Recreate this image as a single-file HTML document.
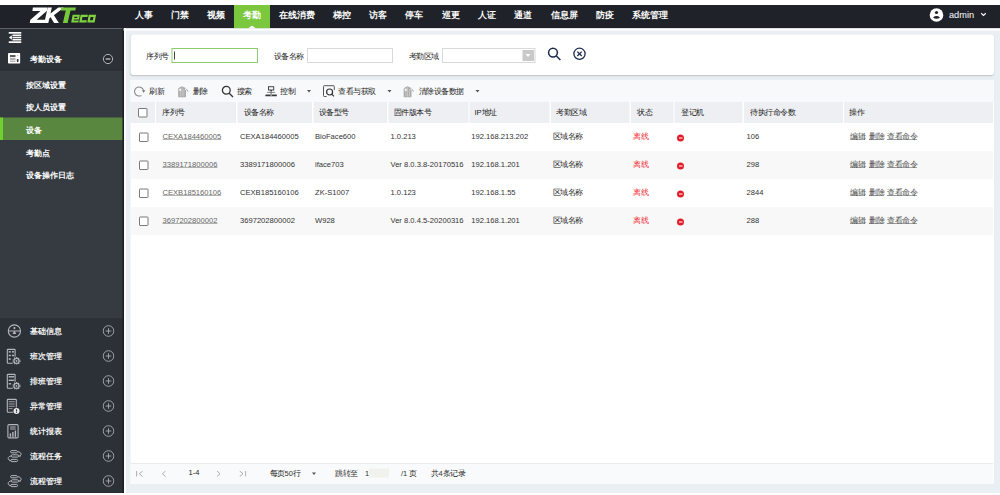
<!DOCTYPE html>
<html><head><meta charset="utf-8">
<style>
html,body{margin:0;padding:0;width:1000px;height:495px;overflow:hidden;background:#fff}
#root{position:absolute;left:0;top:0;width:2000px;height:990px;transform:scale(0.5);transform-origin:0 0;font-family:"Liberation Sans",sans-serif;color:#333}
.a{position:absolute}
#hdr{left:0;top:10px;width:2000px;height:47px;background:#1f2329}
.nav{position:absolute;top:0;height:47px;line-height:40px;color:#fff;font-size:18px;text-align:center;font-weight:bold}
.nav.on{background:#7bc73d}
#side{left:0;top:57px;width:246px;height:929px;background:#2c3137}
.stxt{position:absolute;height:50px;line-height:50px;font-size:16.1px;color:#fff;font-weight:bold;white-space:nowrap}
.stxt.lw{font-weight:bold;color:#f4f4f4;font-size:15.8px;line-height:51px}
#content{left:248px;top:57px;width:1752px;height:929px;background:#eaeff4}
.panel{position:absolute;background:#fff}
.lbl{position:absolute;font-size:15.4px;color:#222;height:30px;line-height:28px;white-space:nowrap;font-weight:500}
.inp{position:absolute;box-sizing:border-box;border:2px solid #d9d9d9;background:#fff}
.tb{position:absolute;top:161px;height:41px;line-height:41px;font-size:15.3px;color:#222;white-space:nowrap;font-weight:500}
.htxt{position:absolute;height:44px;line-height:44px;font-size:15.3px;color:#222;white-space:nowrap;font-weight:500}
.dtxt{position:absolute;height:56px;line-height:53px;font-size:15.2px;color:#333;white-space:nowrap;font-weight:500}
.lnk{color:#666;text-decoration:underline}
.cj{font-weight:500;color:#222}
.lnk.cj{color:#4a4a4a}
.red.cj{color:#f0262e}
.red{color:#ea3a3a}
.cb{position:absolute;width:19px;height:19px;box-sizing:border-box;border:2.5px solid #7a7a7a;border-radius:2px;background:#fff}
.dot{position:absolute;width:14px;height:14px;border-radius:50%;background:#e01e2a}
.dot:after{content:"";position:absolute;left:3.5px;top:5.8px;width:7px;height:2.4px;background:#fff}
.pg{position:absolute;top:927px;height:41px;line-height:39px;font-size:15px;color:#333;white-space:nowrap;font-weight:500}
</style></head><body>
<div id="root">
<div id="hdr" class="a">
<svg class="a" style="left:56px;top:0" width="140" height="46" viewBox="28 5 70 23">
 <path d="M32.9 7.6 L47.4 7.6 L47.1 10.8 L36.6 19.7 L46.1 19.7 L45.6 23 L29.8 23 L30.2 19.9 L40.5 11 L32.4 11 Z" fill="#fff"/>
 <path d="M47.7 7.6 L51.8 7.6 L50.5 13.4 L58.3 7.6 L63.8 7.6 L53.9 15.2 L58.9 23 L54.1 23 L50.6 17.3 L49.4 18.3 L48.3 23 L44.3 23 Z" fill="#fff"/>
 <path d="M61.2 7.6 L75.9 7.6 L75.3 10.6 L70.5 10.6 L67.6 23 L62.9 23 L65.8 10.6 L60.8 10.6 Z" fill="#78c83c"/>
 <g transform="translate(4.35,0) skewX(-11)" fill="#80d23f" fill-rule="evenodd">
  <path d="M71.2 14.8 H78.4 V19.5 H73.2 V20.4 H78.4 V22.4 H71.2 Z M73.2 16.7 V17.9 H76.4 V16.7 Z"/>
  <path d="M79.2 14.8 H86.4 V16.9 H81.4 V20.3 H86.4 V22.4 H79.2 Z"/>
  <path d="M87.3 14.8 H94.6 V22.4 H87.3 Z M89.5 16.9 V20.3 H92.4 V16.9 Z"/>
 </g>
</svg>
<div class="nav" style="left:252px;width:72px">人事</div>
<div class="nav" style="left:324px;width:72px">门禁</div>
<div class="nav" style="left:396px;width:72px">视频</div>
<div class="nav on" style="left:468px;width:72px">考勤</div>
<div class="nav" style="left:540px;width:108px">在线消费</div>
<div class="nav" style="left:648px;width:72px">梯控</div>
<div class="nav" style="left:720px;width:72px">访客</div>
<div class="nav" style="left:792px;width:72px">停车</div>
<div class="nav" style="left:866px;width:72px">巡更</div>
<div class="nav" style="left:938px;width:72px">人证</div>
<div class="nav" style="left:1010px;width:72px">通道</div>
<div class="nav" style="left:1083.5px;width:90px">信息屏</div>
<div class="nav" style="left:1173.5px;width:72px">防疫</div>
<div class="nav" style="left:1245.5px;width:108px">系统管理</div>
<div class="a" style="left:495.5px;top:40.5px;width:0;height:0;border-left:8.5px solid transparent;border-right:8.5px solid transparent;border-bottom:6.5px solid #fff"></div>
<svg class="a" style="left:1857px;top:4px" width="32" height="32" viewBox="0 0 16 16"><circle cx="8" cy="8" r="6.8" fill="#fff"/><circle cx="8" cy="5.5" r="1.6" fill="#1f2329"/><path d="M4.5 10.45 Q8 7.7 11.5 10.45 Q8 13.2 4.5 10.45Z" fill="#1f2329"/></svg>
<div class="a" style="left:1898px;top:0;height:46px;line-height:40px;color:#fff;font-size:18.4px">admin</div>
<svg class="a" style="left:1961px;top:14px" width="12" height="10" viewBox="0 0 12 10"><path d="M1.5 2.5 L6 7 L10.5 2.5" fill="none" stroke="#fff" stroke-width="2.2"/></svg>
</div>

<div id="side" class="a">
</div>
<!-- sidebar contents (absolute to root) -->
<svg class="a" style="left:17px;top:64px" width="26" height="22" viewBox="0 0 13 11"><rect x="0" y="0" width="13" height="1.7" fill="#fff"/><rect x="0" y="9.3" width="13" height="1.7" fill="#fff"/><rect x="4" y="2.5" width="9" height="1.5" fill="#fff"/><rect x="4" y="4.75" width="9" height="1.5" fill="#fff"/><rect x="4" y="7" width="9" height="1.5" fill="#fff"/><path d="M0.5 5.5 L3.4 3.2 V7.8 Z" fill="#fff"/></svg>
<svg class="a" style="left:16px;top:106px" width="25" height="22" viewBox="0 0 12.5 11"><rect x="0" y="0" width="12.3" height="10.6" rx="0.8" fill="#fff"/><rect x="2" y="2.2" width="5.5" height="1.6" fill="#333"/><rect x="2" y="4.8" width="5.5" height="0.8" fill="#888"/><rect x="2" y="6.3" width="5.5" height="0.8" fill="#888"/><rect x="2" y="7.8" width="5.5" height="0.8" fill="#888"/><rect x="8.8" y="6" width="1.8" height="3" rx="0.8" fill="#333"/><rect x="9" y="2.2" width="1.2" height="0.8" fill="#aaa"/></svg>
<div class="stxt" style="top:92px;left:60px">考勤设备</div>
<svg class="a" style="left:204px;top:106px" width="24" height="24" viewBox="0 0 12 12"><circle cx="6" cy="6" r="4.6" fill="#262a2f" stroke="#b9bcbf" stroke-width="0.95"/><line x1="3.6" y1="6" x2="8.4" y2="6" stroke="#c4c7ca" stroke-width="1.3"/></svg>
<div class="a" style="left:0;top:139px;width:246px;height:2px;background:#262a30"></div>
<div class="a" style="left:0;top:141px;width:246px;height:495px;background:#353b41"></div>
<div class="a" style="left:0;top:235px;width:246px;height:45px;background:#5a8740"></div>
<div class="a" style="left:0;top:235px;width:6px;height:45px;background:#70d030"></div>
<div class="stxt" style="top:144px;left:51px">按区域设置</div>
<div class="stxt" style="top:189.4px;left:51px">按人员设置</div>
<div class="stxt" style="top:234.5px;left:51px">设备</div>
<div class="stxt" style="top:280px;left:51px">考勤点</div>
<div class="stxt" style="top:324px;left:51px">设备操作日志</div>
<div class="stxt lw" style="top:636px;left:60px;">基础信息</div>
<svg class="a" style="left:12px;top:645px" width="34" height="34" viewBox="0 0 17 17"><g fill="none" stroke="#b4b8bc" stroke-width="1.1"><circle cx="8.4" cy="8.5" r="6.1"/><line x1="2.4" y1="8.5" x2="14.4" y2="8.5"/></g><g fill="#b4b8bc"><circle cx="8.4" cy="5.6" r="1.1"/><path d="M8.4 8 L10.4 11.5 L6.4 11.5 Z"/></g></svg>
<svg class="a" style="left:205px;top:650px" width="24" height="24" viewBox="0 0 12 12"><g fill="none" stroke="#a9adb1" stroke-width="0.9"><circle cx="6" cy="6" r="5.3"/><line x1="3.2" y1="6" x2="8.8" y2="6"/><line x1="6" y1="3.2" x2="6" y2="8.8"/></g></svg>
<div class="stxt lw" style="top:686px;left:60px;">班次管理</div>
<svg class="a" style="left:9px;top:695px" width="34" height="34" viewBox="0 0 17 17"><path d="M10.6 9.2 V2.6 Q10.6 1.9 9.9 1.9 H3.5 Q2.8 1.9 2.8 2.6 V15.1 Q2.8 15.8 3.5 15.8 H8.2" fill="none" stroke="#b4b8bc" stroke-width="1.1"/><g fill="#b4b8bc"><rect x="4.2" y="3.6" width="2.1" height="1.5"/><rect x="7.4" y="3.6" width="2.1" height="1.5"/><rect x="4.2" y="7.2" width="2.1" height="1.5"/><rect x="7.4" y="7.2" width="2.1" height="1.5"/><rect x="4.2" y="10.8" width="2.1" height="1.5"/></g><g fill="none" stroke="#b4b8bc"><circle cx="12" cy="13.4" r="2.5" stroke-width="1.1"/><circle cx="12" cy="13.4" r="3.4" stroke-width="1.2" stroke-dasharray="1.1 1.07"/></g><circle cx="12" cy="13.4" r="0.9" fill="#b4b8bc"/></svg>
<svg class="a" style="left:205px;top:700px" width="24" height="24" viewBox="0 0 12 12"><g fill="none" stroke="#a9adb1" stroke-width="0.9"><circle cx="6" cy="6" r="5.3"/><line x1="3.2" y1="6" x2="8.8" y2="6"/><line x1="6" y1="3.2" x2="6" y2="8.8"/></g></svg>
<div class="stxt lw" style="top:736px;left:60px;">排班管理</div>
<svg class="a" style="left:9px;top:745px" width="34" height="34" viewBox="0 0 17 17"><path d="M10.6 9.2 V2.6 Q10.6 1.9 9.9 1.9 H3.5 Q2.8 1.9 2.8 2.6 V15.1 Q2.8 15.8 3.5 15.8 H8.2" fill="none" stroke="#b4b8bc" stroke-width="1.1"/><g fill="#b4b8bc"><rect x="4.2" y="3.6" width="5.4" height="1.4"/><rect x="4.2" y="7.1" width="5.4" height="1.4"/><rect x="4.2" y="10.6" width="2.4" height="1.4"/></g><g fill="none" stroke="#b4b8bc"><circle cx="12" cy="13.4" r="2.5" stroke-width="1.1"/><circle cx="12" cy="13.4" r="3.4" stroke-width="1.2" stroke-dasharray="1.1 1.07"/></g><circle cx="12" cy="13.4" r="0.9" fill="#b4b8bc"/></svg>
<svg class="a" style="left:205px;top:750px" width="24" height="24" viewBox="0 0 12 12"><g fill="none" stroke="#a9adb1" stroke-width="0.9"><circle cx="6" cy="6" r="5.3"/><line x1="3.2" y1="6" x2="8.8" y2="6"/><line x1="6" y1="3.2" x2="6" y2="8.8"/></g></svg>
<div class="stxt lw" style="top:786px;left:60px;">异常管理</div>
<svg class="a" style="left:9px;top:795px" width="34" height="34" viewBox="0 0 17 17"><path d="M11.8 10 V2.6 Q11.8 1.9 11.1 1.9 H3.5 Q2.8 1.9 2.8 2.6 V14.1 Q2.8 14.8 3.5 14.8 H8.8" fill="none" stroke="#b4b8bc" stroke-width="1.1"/><g fill="#8a8e92"><rect x="4.2" y="3.6" width="6" height="1.2"/><rect x="4.2" y="5.9" width="6" height="1.2"/><rect x="4.2" y="8.2" width="6" height="1.2"/><rect x="4.2" y="10.5" width="4" height="1.2"/></g><circle cx="12" cy="13.4" r="3" fill="#ececec"/><rect x="11.4" y="11.8" width="1.2" height="2.2" fill="#2c3136"/><rect x="11.4" y="14.4" width="1.2" height="0.9" fill="#2c3136"/></svg>
<svg class="a" style="left:205px;top:800px" width="24" height="24" viewBox="0 0 12 12"><g fill="none" stroke="#a9adb1" stroke-width="0.9"><circle cx="6" cy="6" r="5.3"/><line x1="3.2" y1="6" x2="8.8" y2="6"/><line x1="6" y1="3.2" x2="6" y2="8.8"/></g></svg>
<div class="stxt lw" style="top:836px;left:60px;">统计报表</div>
<svg class="a" style="left:9px;top:845px" width="34" height="34" viewBox="0 0 17 17"><rect x="3.4" y="2.1" width="10.2" height="13.3" rx="1.1" fill="none" stroke="#b4b8bc" stroke-width="1.1"/><g fill="#b4b8bc"><rect x="5.6" y="4" width="5.6" height="1"/><rect x="5.6" y="6" width="5.6" height="1"/><rect x="5.2" y="10.8" width="1.4" height="3.6"/><rect x="7.7" y="9.4" width="1.4" height="5"/><rect x="10.2" y="8" width="1.4" height="6.4"/></g></svg>
<svg class="a" style="left:205px;top:850px" width="24" height="24" viewBox="0 0 12 12"><g fill="none" stroke="#a9adb1" stroke-width="0.9"><circle cx="6" cy="6" r="5.3"/><line x1="3.2" y1="6" x2="8.8" y2="6"/><line x1="6" y1="3.2" x2="6" y2="8.8"/></g></svg>
<div class="stxt lw" style="top:886px;left:60px;">流程任务</div>
<svg class="a" style="left:10px;top:895px" width="34" height="34" viewBox="0 0 17 17"><g fill="none" stroke="#b4b8bc" stroke-width="1"><rect x="5.6" y="3.1" width="6.8" height="2.2" rx="1.1"/><rect x="6.3" y="7.3" width="7.3" height="2.3" rx="1.15"/><rect x="5.8" y="11.9" width="6.8" height="2.2" rx="1.1"/><path d="M12.9 4.2 C16.6 4.6 17 7.6 14.6 8.6"/><path d="M6 8.5 C2.4 9 2.2 12.4 5.4 13"/></g><path d="M13.6 8.6 L15.4 7.4 L15.6 9.6 Z" fill="#b4b8bc"/><path d="M6.4 13 L4.6 11.9 L4.6 14.1 Z" fill="#b4b8bc"/></svg>
<svg class="a" style="left:205px;top:900px" width="24" height="24" viewBox="0 0 12 12"><g fill="none" stroke="#a9adb1" stroke-width="0.9"><circle cx="6" cy="6" r="5.3"/><line x1="3.2" y1="6" x2="8.8" y2="6"/><line x1="6" y1="3.2" x2="6" y2="8.8"/></g></svg>
<div class="stxt lw" style="top:936px;left:60px;">流程管理</div>
<svg class="a" style="left:10px;top:945px" width="34" height="34" viewBox="0 0 17 17"><g fill="none" stroke="#b4b8bc" stroke-width="1"><rect x="5.6" y="3.1" width="6.8" height="2.2" rx="1.1"/><rect x="6.3" y="7.3" width="7.3" height="2.3" rx="1.15"/><rect x="5.8" y="11.9" width="6.8" height="2.2" rx="1.1"/><path d="M12.9 4.2 C16.6 4.6 17 7.6 14.6 8.6"/><path d="M6 8.5 C2.4 9 2.2 12.4 5.4 13"/></g><path d="M13.6 8.6 L15.4 7.4 L15.6 9.6 Z" fill="#b4b8bc"/><path d="M6.4 13 L4.6 11.9 L4.6 14.1 Z" fill="#b4b8bc"/></svg>
<svg class="a" style="left:205px;top:950px" width="24" height="24" viewBox="0 0 12 12"><g fill="none" stroke="#a9adb1" stroke-width="0.9"><circle cx="6" cy="6" r="5.3"/><line x1="3.2" y1="6" x2="8.8" y2="6"/><line x1="6" y1="3.2" x2="6" y2="8.8"/></g></svg>
<div class="a" style="left:245px;top:56px;width:3px;height:930px;background:#1b1f24"></div>

<div id="content" class="a"></div>
<div class="a" style="left:248px;top:56px;width:4px;height:930px;background:#fff"></div>
<div class="a" style="left:247px;top:57px;width:1753px;height:4px;background:#fff"></div>

<!-- search panel -->
<div class="panel" style="left:261px;top:69px;width:1727px;height:81px;border-radius:6px;box-shadow:0 1px 3px rgba(0,0,0,0.18)"></div>
<div class="lbl" style="left:292px;top:99px">序列号</div>
<div class="inp" style="left:343px;top:96px;width:173px;height:30px;border-color:#8fca6c"></div>
<div class="a" style="left:348px;top:103px;width:1.6px;height:16px;background:#444"></div>
<div class="lbl" style="left:547px;top:99px">设备名称</div>
<div class="inp" style="left:614px;top:96px;width:172px;height:30px"></div>
<div class="lbl" style="left:817px;top:99px">考勤区域</div>
<div class="inp" style="left:884px;top:96px;width:187px;height:30px"></div>
<div class="a" style="left:1045px;top:100px;width:23px;height:22px;background:#c9c9c9"></div>
<div class="a" style="left:1051px;top:108px;width:0;height:0;border-left:5.5px solid transparent;border-right:5.5px solid transparent;border-top:6px solid #fff"></div>
<svg class="a" style="left:1092px;top:92px" width="34" height="34" viewBox="0 0 17 17"><g fill="none" stroke="#1c2a4c" stroke-width="1.5"><circle cx="7" cy="6.6" r="4.4"/><line x1="10.2" y1="9.8" x2="14.4" y2="14"/></g></svg>
<svg class="a" style="left:1144px;top:92px" width="30" height="30" viewBox="0 0 15 15"><g fill="none" stroke="#1c2a4c" stroke-width="1.3"><circle cx="7.5" cy="7.8" r="5.6"/><line x1="5.3" y1="5.6" x2="9.7" y2="10"/><line x1="9.7" y1="5.6" x2="5.3" y2="10"/></g></svg>

<!-- main panel -->
<div class="panel" style="left:261px;top:160px;width:1727px;height:807px;box-shadow:0 1px 3px rgba(0,0,0,0.18)"></div>
<div class="a" style="left:261px;top:160px;width:1727px;height:43.5px;background:#f8f9fb"></div>
<div class="a" style="left:261px;top:203.5px;width:1725px;height:42.5px;background:#eeeff2"></div>
<svg class="a" style="left:266px;top:172px" width="26" height="22" viewBox="0 0 13 11"><path d="M8.35 9.4 A4.5 4.5 0 1 1 10.45 4.34" fill="none" stroke="#8a8a8a" stroke-width="1.1"/><path d="M9 4.3 L12.3 4.3 L10.6 6.7 Z" fill="#707070"/></svg>
<div class="tb" style="left:298px">刷新</div>
<svg class="a" style="left:354px;top:170px" width="26" height="26" viewBox="0 0 13 13"><path d="M1.2 4 Q1.2 2.6 2.6 2.4 L5 1.2 L7.6 2.4 Q9 2.6 9 4 V11.6 Q9 12.2 8.4 12.2 H1.8 Q1.2 12.2 1.2 11.6 Z" fill="#a9a9a9"/><path d="M2.2 3.6 H4.2 V6.2 H2.2 Z" fill="#f2f2f2"/><g stroke="#d8d8d8" stroke-width="0.7"><line x1="3.3" y1="6.8" x2="3.3" y2="11.6"/><line x1="5.1" y1="2.2" x2="5.1" y2="11.6"/><line x1="6.9" y1="4" x2="6.9" y2="11.6"/></g><path d="M8.2 3.4 Q10.6 3.6 11.6 6.4 L10.6 6.8 Q9.8 5 8.2 4.8 Z" fill="#b0b0b0"/><circle cx="8.6" cy="4.2" r="0.7" fill="#fff"/></svg>
<div class="tb" style="left:385px">删除</div>
<svg class="a" style="left:442px;top:170px" width="26" height="26" viewBox="0 0 13 13"><g fill="none" stroke="#333" stroke-width="1.3"><circle cx="5.3" cy="5.3" r="3.9"/><line x1="8.2" y1="8.2" x2="12" y2="12"/></g></svg>
<div class="tb" style="left:473.5px">搜索</div>
<svg class="a" style="left:530px;top:170px" width="26" height="26" viewBox="0 0 13 13"><rect x="3.5" y="1.7" width="5.2" height="3.3" fill="none" stroke="#444" stroke-width="1"/><rect x="5.4" y="5" width="1.4" height="1.3" fill="#333"/><line x1="2.1" y1="7.4" x2="10.1" y2="7.4" stroke="#666" stroke-width="0.8"/><line x1="6.1" y1="6.2" x2="6.1" y2="9.4" stroke="#555" stroke-width="0.8"/><rect x="0.4" y="9.4" width="11.5" height="1.8" rx="0.5" fill="#3a3a3a"/><rect x="5.6" y="9.7" width="1" height="1.2" fill="#ddd"/></svg>
<div class="tb" style="left:560.5px">控制</div>
<div class="a" style="left:614px;top:180px;width:0;height:0;border-left:4.5px solid transparent;border-right:4.5px solid transparent;border-top:5px solid #555"></div>
<svg class="a" style="left:644px;top:169px" width="28" height="26" viewBox="0 0 14 13"><g fill="none" stroke="#555" stroke-width="1"><path d="M4.6 12 H2.3 Q1.5 12 1.5 11.2 V2 Q1.5 1.2 2.3 1.2 H11.5 Q12.3 1.2 12.3 2 V5.6"/></g><g fill="none" stroke="#333" stroke-width="1.2"><circle cx="7.6" cy="7.5" r="3"/><line x1="9.8" y1="9.7" x2="11.9" y2="11.8"/></g></svg>
<div class="tb" style="left:676px">查看与获取</div>
<div class="a" style="left:775px;top:180px;width:0;height:0;border-left:4.5px solid transparent;border-right:4.5px solid transparent;border-top:5px solid #555"></div>
<svg class="a" style="left:805px;top:170px" width="26" height="26" viewBox="0 0 13 13"><path d="M1.2 4 Q1.2 2.6 2.6 2.4 L5 1.2 L7.6 2.4 Q9 2.6 9 4 V11.6 Q9 12.2 8.4 12.2 H1.8 Q1.2 12.2 1.2 11.6 Z" fill="#a9a9a9"/><path d="M2.2 3.6 H4.2 V6.2 H2.2 Z" fill="#f2f2f2"/><g stroke="#d8d8d8" stroke-width="0.7"><line x1="3.3" y1="6.8" x2="3.3" y2="11.6"/><line x1="5.1" y1="2.2" x2="5.1" y2="11.6"/><line x1="6.9" y1="4" x2="6.9" y2="11.6"/></g><path d="M8.2 3.4 Q10.6 3.6 11.6 6.4 L10.6 6.8 Q9.8 5 8.2 4.8 Z" fill="#b0b0b0"/><circle cx="8.6" cy="4.2" r="0.7" fill="#fff"/></svg>
<div class="tb" style="left:837px">清除设备数据</div>
<div class="a" style="left:951px;top:180px;width:0;height:0;border-left:4.5px solid transparent;border-right:4.5px solid transparent;border-top:5px solid #555"></div>
<div class="a" style="left:309.6px;top:203.5px;width:2.5px;height:42.5px;background:#fff"></div>
<div class="a" style="left:472px;top:203.5px;width:2.5px;height:42.5px;background:#fff"></div>
<div class="a" style="left:624px;top:203.5px;width:2.5px;height:42.5px;background:#fff"></div>
<div class="a" style="left:774px;top:203.5px;width:2.5px;height:42.5px;background:#fff"></div>
<div class="a" style="left:936.5px;top:203.5px;width:2.5px;height:42.5px;background:#fff"></div>
<div class="a" style="left:1099px;top:203.5px;width:2.5px;height:42.5px;background:#fff"></div>
<div class="a" style="left:1259px;top:203.5px;width:2.5px;height:42.5px;background:#fff"></div>
<div class="a" style="left:1346.5px;top:203.5px;width:2.5px;height:42.5px;background:#fff"></div>
<div class="a" style="left:1485px;top:203.5px;width:2.5px;height:42.5px;background:#fff"></div>
<div class="a" style="left:1685.5px;top:203.5px;width:2.5px;height:42.5px;background:#fff"></div>
<div class="cb" style="left:276px;top:216px"></div>
<div class="htxt" style="left:324.6px;top:202px">序列号</div>
<div class="htxt" style="left:487.5px;top:202px">设备名称</div>
<div class="htxt" style="left:637.5px;top:202px">设备型号</div>
<div class="htxt" style="left:787.5px;top:202px">固件版本号</div>
<div class="htxt" style="left:949px;top:202px">IP地址</div>
<div class="htxt" style="left:1112.5px;top:202px">考勤区域</div>
<div class="htxt" style="left:1274px;top:202px">状态</div>
<div class="htxt" style="left:1362.5px;top:202px">登记机</div>
<div class="htxt" style="left:1500.5px;top:202px">待执行命令数</div>
<div class="htxt" style="left:1698.8px;top:202px">操作</div>
<div class="cb" style="left:278px;top:265px"></div>
<div class="dtxt lnk" style="left:325px;top:246px">CEXA184460005</div>
<div class="dtxt" style="left:480px;top:246px">CEXA184460005</div>
<div class="dtxt" style="left:630px;top:246px">BioFace600</div>
<div class="dtxt" style="left:781px;top:246px">1.0.213</div>
<div class="dtxt" style="left:942.5px;top:246px">192.168.213.202</div>
<div class="dtxt cj" style="left:1105px;top:246px">区域名称</div>
<div class="dtxt red cj" style="left:1266px;top:246px">离线</div>
<div class="dot" style="left:1354px;top:269px"></div>
<div class="dtxt" style="left:1493px;top:246px">106</div>
<div class="dtxt lnk cj" style="left:1700px;top:246px">编辑</div>
<div class="dtxt lnk cj" style="left:1738px;top:246px">删除</div>
<div class="dtxt lnk cj" style="left:1774px;top:246px">查看命令</div>
<div class="a" style="left:261px;top:302px;width:1725px;height:56px;background:#f8f8f8"></div>
<div class="cb" style="left:278px;top:321px"></div>
<div class="dtxt lnk" style="left:325px;top:302px">3389171800006</div>
<div class="dtxt" style="left:480px;top:302px">3389171800006</div>
<div class="dtxt" style="left:630px;top:302px">iface703</div>
<div class="dtxt" style="left:781px;top:302px">Ver 8.0.3.8-20170516</div>
<div class="dtxt" style="left:942.5px;top:302px">192.168.1.201</div>
<div class="dtxt cj" style="left:1105px;top:302px">区域名称</div>
<div class="dtxt red cj" style="left:1266px;top:302px">离线</div>
<div class="dot" style="left:1354px;top:325px"></div>
<div class="dtxt" style="left:1493px;top:302px">298</div>
<div class="dtxt lnk cj" style="left:1700px;top:302px">编辑</div>
<div class="dtxt lnk cj" style="left:1738px;top:302px">删除</div>
<div class="dtxt lnk cj" style="left:1774px;top:302px">查看命令</div>
<div class="cb" style="left:278px;top:377px"></div>
<div class="dtxt lnk" style="left:325px;top:358px">CEXB185160106</div>
<div class="dtxt" style="left:480px;top:358px">CEXB185160106</div>
<div class="dtxt" style="left:630px;top:358px">ZK-S1007</div>
<div class="dtxt" style="left:781px;top:358px">1.0.123</div>
<div class="dtxt" style="left:942.5px;top:358px">192.168.1.55</div>
<div class="dtxt cj" style="left:1105px;top:358px">区域名称</div>
<div class="dtxt red cj" style="left:1266px;top:358px">离线</div>
<div class="dot" style="left:1354px;top:381px"></div>
<div class="dtxt" style="left:1493px;top:358px">2844</div>
<div class="dtxt lnk cj" style="left:1700px;top:358px">编辑</div>
<div class="dtxt lnk cj" style="left:1738px;top:358px">删除</div>
<div class="dtxt lnk cj" style="left:1774px;top:358px">查看命令</div>
<div class="a" style="left:261px;top:414px;width:1725px;height:56px;background:#f8f8f8"></div>
<div class="cb" style="left:278px;top:433px"></div>
<div class="dtxt lnk" style="left:325px;top:414px">3697202800002</div>
<div class="dtxt" style="left:480px;top:414px">3697202800002</div>
<div class="dtxt" style="left:630px;top:414px">W928</div>
<div class="dtxt" style="left:781px;top:414px">Ver 8.0.4.5-20200316</div>
<div class="dtxt" style="left:942.5px;top:414px">192.168.1.201</div>
<div class="dtxt cj" style="left:1105px;top:414px">区域名称</div>
<div class="dtxt red cj" style="left:1266px;top:414px">离线</div>
<div class="dot" style="left:1354px;top:437px"></div>
<div class="dtxt" style="left:1493px;top:414px">288</div>
<div class="dtxt lnk cj" style="left:1700px;top:414px">编辑</div>
<div class="dtxt lnk cj" style="left:1738px;top:414px">删除</div>
<div class="dtxt lnk cj" style="left:1774px;top:414px">查看命令</div>

<!-- pagination -->
<div class="a" style="left:261px;top:926px;width:1725px;height:2px;background:#ebebeb"></div>
<div class="a" style="left:261px;top:928px;width:1725px;height:40px;background:#f9fafb"></div>
<svg class="a" style="left:272px;top:941px" width="16" height="13" viewBox="0 0 8 6.5"><g fill="none" stroke="#999" stroke-width="0.8"><line x1="0.6" y1="0.5" x2="0.6" y2="6"/><path d="M6.6 0.5 L3.3 3.25 L6.6 6"/></g></svg>
<svg class="a" style="left:323px;top:941px" width="10" height="13" viewBox="0 0 5 6.5"><path d="M4 0.5 L1 3.25 L4 6" fill="none" stroke="#999" stroke-width="0.8"/></svg>
<div class="pg" style="left:377px;top:925px;color:#222">1-4</div>
<svg class="a" style="left:432px;top:941px" width="10" height="13" viewBox="0 0 5 6.5"><path d="M1 0.5 L4 3.25 L1 6" fill="none" stroke="#999" stroke-width="0.8"/></svg>
<svg class="a" style="left:477px;top:941px" width="16" height="13" viewBox="0 0 8 6.5"><g fill="none" stroke="#999" stroke-width="0.8"><line x1="7.2" y1="0.5" x2="7.2" y2="6"/><path d="M1.2 0.5 L4.5 3.25 L1.2 6"/></g></svg>
<div class="pg" style="left:539px"><b class="cj">每页</b>50<b class="cj">行</b></div>
<div class="a" style="left:624px;top:945px;width:0;height:0;border-left:4.5px solid transparent;border-right:4.5px solid transparent;border-top:5px solid #555"></div>
<div class="pg cj" style="left:670px">跳转至</div>
<div class="pg" style="left:730px">1</div>
<div class="a" style="left:738px;top:937px;width:40px;height:18px;background:#f1f1ed"></div>
<div class="pg" style="left:802px">/1 <b class="cj">页</b></div>
<div class="pg" style="left:862px"><b class="cj">共</b>4<b class="cj">条记录</b></div>

<div class="a" style="left:0;top:986px;width:2000px;height:4px;background:#fff"></div>
</div>
</body></html>
